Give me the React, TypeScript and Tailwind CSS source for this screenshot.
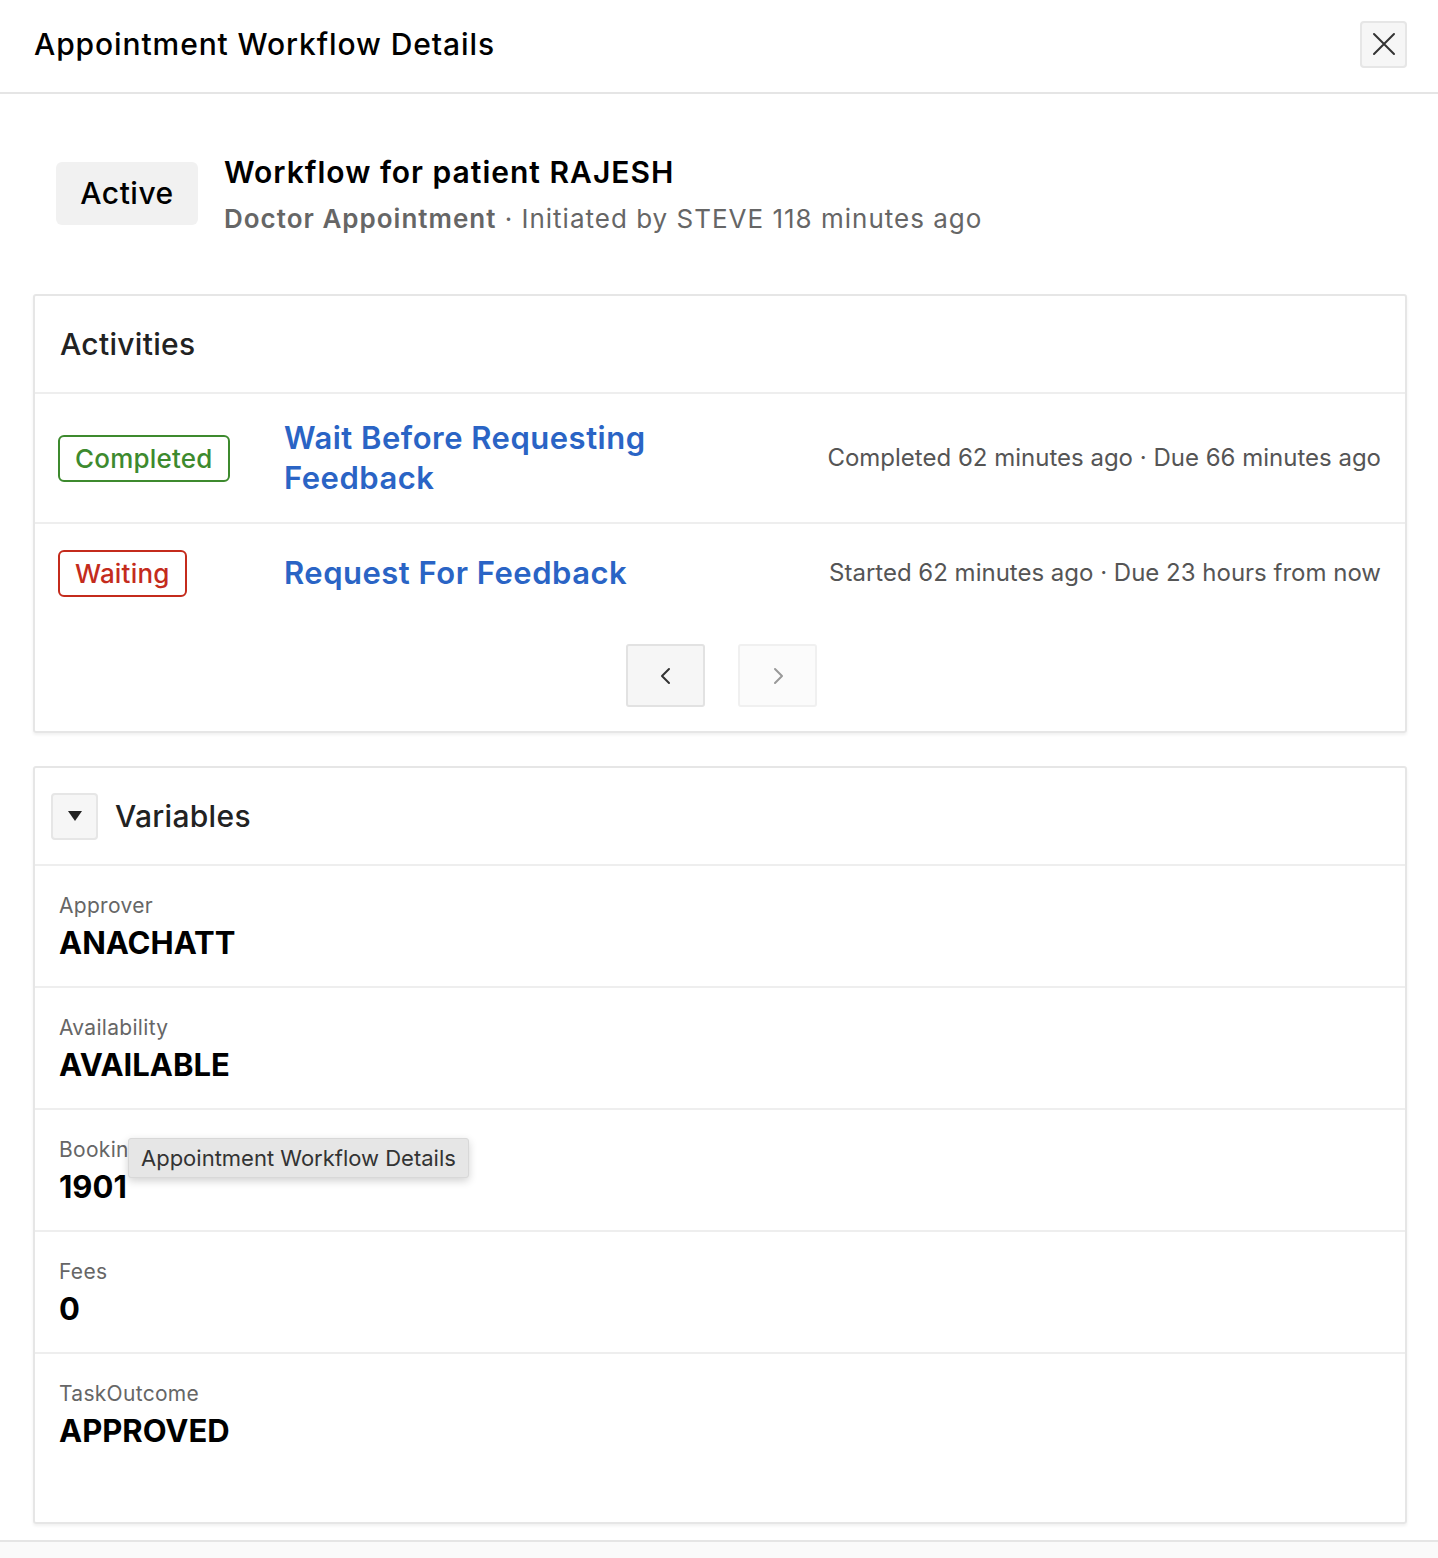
import React from "react";

const font = { fontFamily: "Inter, 'Noto Sans', sans-serif" };

function Badge({ label, tone }: { label: string; tone: "green" | "red" }) {
  const cls =
    tone === "green"
      ? "border-[#3d8a2e] text-[#3d8a2e]"
      : "border-[#c42b1c] text-[#c42b1c]";
  return (
    <span className={`inline-flex items-center h-[47px] px-[15px] rounded-[6px] border-2 text-[26px] font-medium tracking-[0.2px] ${cls}`}>
      {label}
    </span>
  );
}

function ActivityRow({ badge, tone, title, meta, last }: { badge: string; tone: "green" | "red"; title: React.ReactNode; meta: string; last?: boolean }) {
  return (
    <div className={`flex items-center pl-[23px] pr-[24px] ${last ? "h-[98px]" : "h-[130px] border-b-2 border-[#eeeeee]"}`}>
      <div className="w-[226px] shrink-0">
        <Badge label={badge} tone={tone} />
      </div>
      <div className="w-[430px] shrink-0 text-[31px] leading-[40px] font-semibold text-[#2a64c5] tracking-[0.5px]">{title}</div>
      <div className="flex-1 text-right text-[24px] text-[#555555]">{meta}</div>
    </div>
  );
}

function VarRow({ label, value, last }: { label: string; value: string; last?: boolean }) {
  return (
    <div className={`px-[24px] ${last ? "h-[168px] pt-[27px]" : "h-[122px] pt-[27px] border-b-2 border-[#eeeeee]"}`}>
      <div className="text-[21px] leading-[26px] text-[#666666] tracking-[0.3px]">{label}</div>
      <div className="mt-[4px] text-[31px] leading-[40px] font-bold text-black">{value}</div>
    </div>
  );
}

export default function App() {
  return (
    <div className="w-[1438px] h-[1558px] bg-white relative overflow-hidden" style={font}>
      <div className="h-[94px] flex items-center justify-between pl-[34px] pr-[31px] pb-[4px] border-b-2 border-[#e5e5e5]">
        <h1 className="text-[30px] font-medium text-black tracking-[0.9px]">Appointment Workflow Details</h1>
        <button className="w-[47px] h-[47px] flex items-center justify-center bg-[#f6f6f6] border-2 border-[#e6e6e6] rounded-[4px]">
          <svg width="24" height="24" viewBox="0 0 24 24" fill="none" stroke="#333" strokeWidth="2" strokeLinecap="round">
            <path d="M2 2L22 22M22 2L2 22" />
          </svg>
        </button>
      </div>

      <div className="pl-[33px] pr-[31px] pt-[59px]">
        <div className="flex items-start gap-[26px] pl-[23px]">
          <div className="mt-[9px] w-[142px] h-[63px] bg-[#f1f1f1] rounded-[6px] flex items-center justify-center text-[30px] font-medium text-black tracking-[0.5px]">
            Active
          </div>
          <div>
            <div className="text-[30px] leading-[38px] font-semibold text-black tracking-[1px]">Workflow for patient RAJESH</div>
            <div className="mt-[12px] text-[26px] leading-[32px] text-[#666666] tracking-[1px]">
              <span className="font-semibold">Doctor Appointment</span> · Initiated by STEVE 118 minutes ago
            </div>
          </div>
        </div>

        <div className="mt-[59px] border-2 border-[#e6e6e6] rounded-[3px] shadow-[0_2px_3px_rgba(0,0,0,0.06)]">
          <div className="h-[98px] flex items-center px-[25px] border-b-2 border-[#eeeeee]">
            <h2 className="text-[30px] font-medium text-[#222222] tracking-[0.3px]">Activities</h2>
          </div>
          <ActivityRow badge="Completed" tone="green" title={<>Wait Before Requesting<br />Feedback</>} meta="Completed 62 minutes ago · Due 66 minutes ago" />
          <ActivityRow badge="Waiting" tone="red" title="Request For Feedback" meta="Started 62 minutes ago · Due 23 hours from now" last />
          <div className="flex justify-center gap-[33px] pt-[22px] pb-[24px] pl-[3px]">
            <button className="w-[79px] h-[63px] flex items-center justify-center bg-[#f6f6f6] border-2 border-[#e2e2e2] rounded-[3px]">
              <svg width="14" height="22" viewBox="0 0 14 22" fill="none" stroke="#333" strokeWidth="2" strokeLinecap="round" strokeLinejoin="round">
                <path d="M10 4L3 11L10 18" />
              </svg>
            </button>
            <button className="w-[79px] h-[63px] flex items-center justify-center bg-[#fbfbfb] border-2 border-[#f0f0f0] rounded-[3px]">
              <svg width="14" height="22" viewBox="0 0 14 22" fill="none" stroke="#999" strokeWidth="2" strokeLinecap="round" strokeLinejoin="round">
                <path d="M4 4L11 11L4 18" />
              </svg>
            </button>
          </div>
        </div>

        <div className="mt-[33px] border-2 border-[#e6e6e6] rounded-[3px] shadow-[0_2px_3px_rgba(0,0,0,0.06)]">
          <div className="h-[98px] flex items-center gap-[17px] px-[16px] border-b-2 border-[#eeeeee]">
            <button className="w-[47px] h-[47px] flex items-center justify-center bg-[#f6f6f6] border-2 border-[#e6e6e6] rounded-[4px]">
              <svg width="16" height="12" viewBox="0 0 16 12">
                <path d="M1 1H15L8 11Z" fill="#222" />
              </svg>
            </button>
            <h2 className="text-[30px] font-medium text-[#222222] tracking-[0.3px]">Variables</h2>
          </div>
          <VarRow label="Approver" value="ANACHATT" />
          <VarRow label="Availability" value="AVAILABLE" />
          <div className="relative">
            <VarRow label="BookingId" value="1901" />
            <div className="absolute left-[93px] top-[28px] h-[40px] px-[12px] flex items-center bg-[#e6e6e6] border border-[#d8d8d8] rounded-[3px] shadow-[0_3px_8px_rgba(0,0,0,0.18)] text-[22px] text-[#333333] whitespace-nowrap">
              Appointment Workflow Details
            </div>
          </div>
          <VarRow label="Fees" value="0" />
          <VarRow label="TaskOutcome" value="APPROVED" last />
        </div>
      </div>

      <div className="absolute left-0 right-0 bottom-0 h-[18px] bg-[#fafafa] border-t-2 border-[#e5e5e5]" />
    </div>
  );
}
